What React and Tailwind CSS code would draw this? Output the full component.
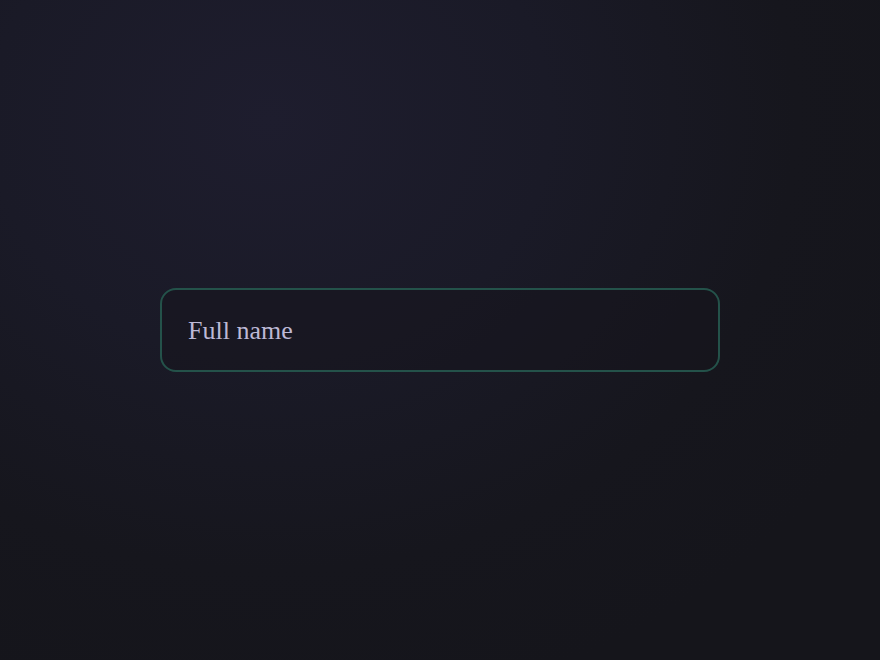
export default function App() {
  return (
    <div className="w-[880px] h-[660px] flex items-center justify-center bg-[#15151b] bg-[radial-gradient(ellipse_700px_600px_at_270px_120px,#1e1d2e_0%,#1a1a27_40%,#16161d_75%,#15151b_100%)]">
      <div className="w-[560px] h-[84px] flex items-center px-[26px] rounded-[16px] border-2 border-[#24524a] bg-[#15141c]/50">
        <span className="text-[26px] text-[#bdb9d6] font-['Liberation_Serif',serif]">Full name</span>
      </div>
    </div>
  );
}
